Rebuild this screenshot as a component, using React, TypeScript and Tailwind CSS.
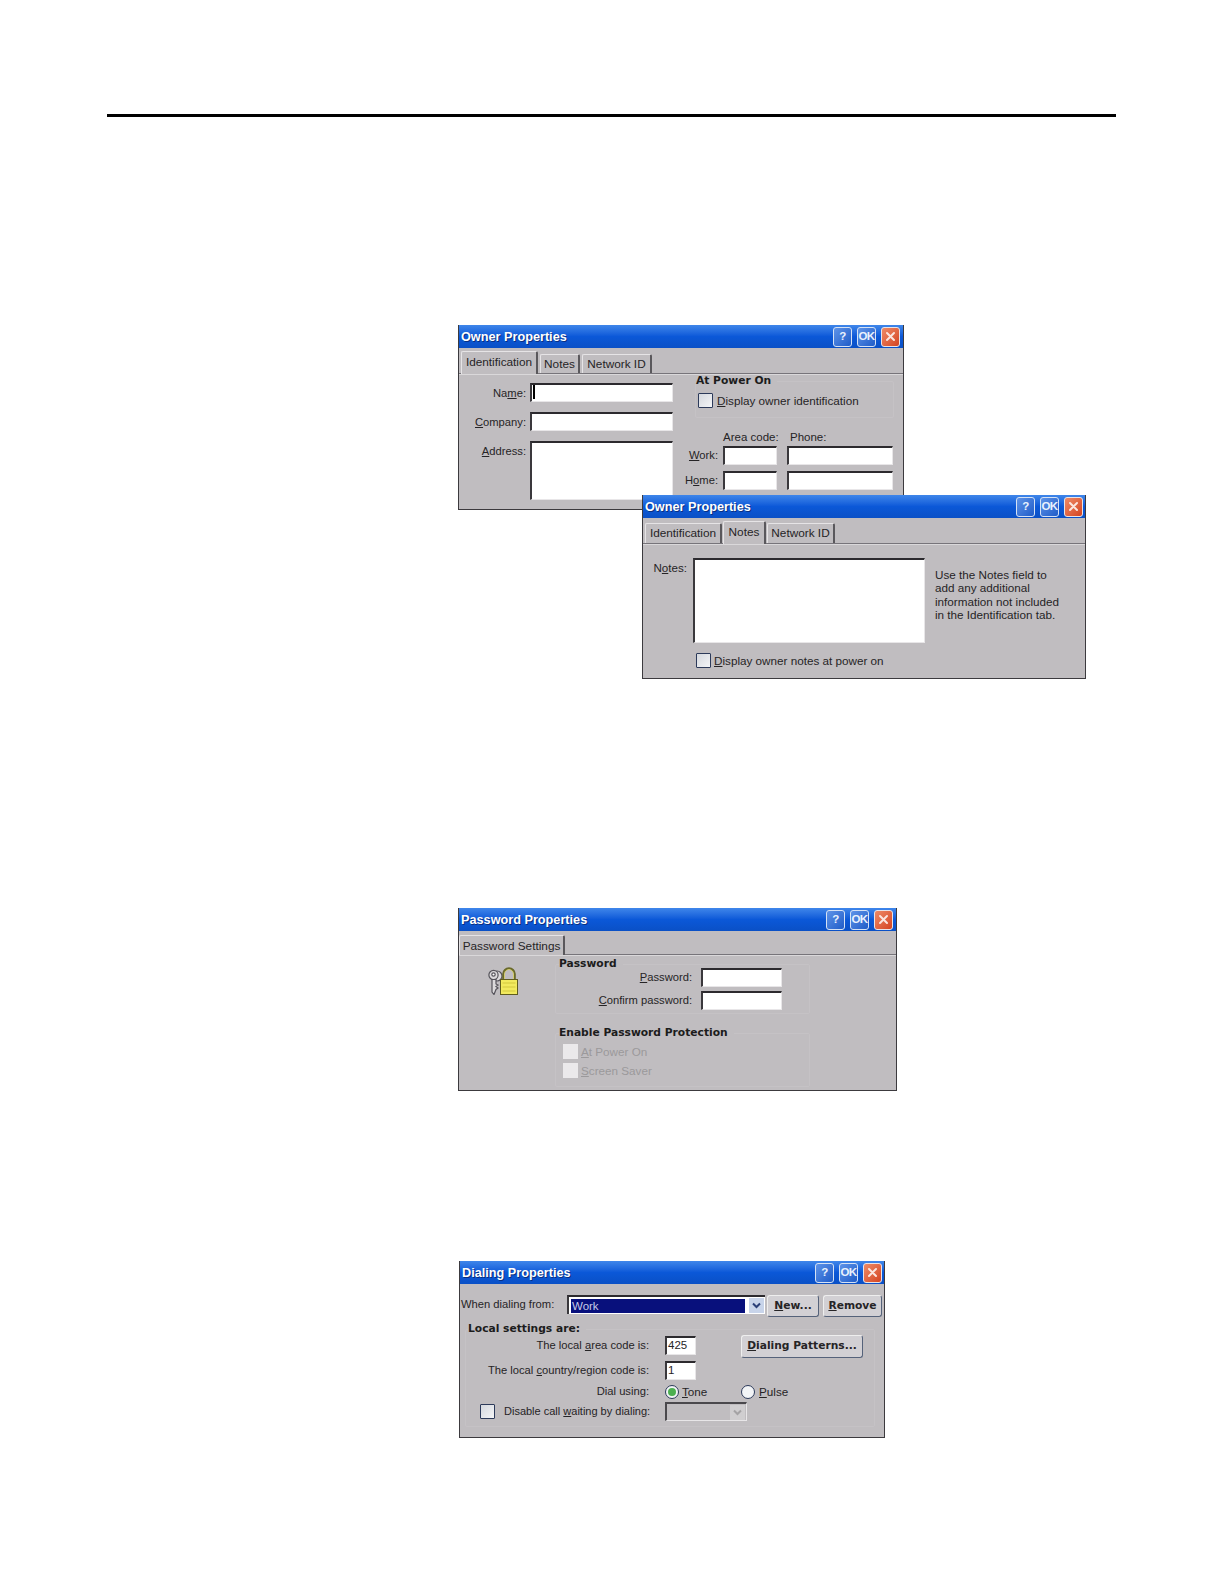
import React from 'react';

const uiFont = "font-['Liberation_Sans',Arial,sans-serif]";
const boldFont = "font-['DejaVu_Sans',Verdana,sans-serif] font-bold";

const TitleButton = ({ kind }: { kind: 'help' | 'ok' | 'close' }) => {
  if (kind === 'close') {
    return (
      <div className="w-[19px] h-[20px] rounded-[3px] border border-[#e8e4e8] bg-linear-to-br from-[#ee8a66] to-[#d4431f] flex items-center justify-center">
        <svg width="11" height="11" viewBox="0 0 11 11">
          <path d="M2 2 L9 9 M9 2 L2 9" stroke="#fbe6df" strokeWidth="2" strokeLinecap="round" />
        </svg>
      </div>
    );
  }
  return (
    <div className="w-[19px] h-[20px] rounded-[3px] border border-[#d5e2f5] bg-linear-to-br from-[#5e93e8] to-[#1f5cc8] flex items-center justify-center text-[#e9f1fd] text-[11.5px] leading-none font-bold font-['Liberation_Sans',sans-serif] tracking-[-0.5px]">
      {kind === 'help' ? '?' : 'OK'}
    </div>
  );
};

const TitleBar = ({ title, buttons = 'gap-[5px] pr-[3px]' }: { title: string; buttons?: string }) => (
  <div className="h-[23px] flex items-center justify-between pl-[2px] bg-linear-to-b from-[#3f86ea] via-[#0b58d8] to-[#0a50c6]">
    <span className="pt-px text-white text-[12.7px] font-bold leading-none font-['Liberation_Sans',Arial,sans-serif] [text-shadow:1px_1px_0_#0a2f80]">
      {title}
    </span>
    <div className={`flex ${buttons}`}>
      <TitleButton kind="help" />
      <TitleButton kind="ok" />
      <TitleButton kind="close" />
    </div>
  </div>
);

interface TabInfo {
  label: string;
  size: string;
  active?: boolean;
}

const Tabs = ({ tabs, className }: { tabs: TabInfo[]; className: string }) => (
  <div className={`flex items-end border-b border-[#77747a] shadow-[0_1px_0_#dad8da] ${className}`}>
    {tabs.map((t) => (
      <div
        key={t.label}
        className={
          t.active
            ? `${t.size} -mb-px pt-[2px] text-center whitespace-nowrap text-[11.8px] leading-[16px] bg-[#c0bdc0] border-t border-l border-[#e6e4e6] border-r-2 border-r-[#5a585c] rounded-t-[2px]`
            : `${t.size} pt-px text-center whitespace-nowrap text-[11.8px] leading-[16px] border-t border-l border-[#e6e4e6] border-r-2 border-r-[#5a585c] rounded-t-[2px]`
        }
      >
        {t.label}
      </div>
    ))}
  </div>
);

const Field = ({ className = '', children }: { className?: string; children?: React.ReactNode }) => (
  <div className={`bg-white border-t-2 border-l-2 border-t-[#2c2a2e] border-l-[#3a383c] border-r border-b border-r-[#e8e6e8] border-b-[#e8e6e8] text-[11.5px] leading-[15px] pl-px ${className}`}>
    {children}
  </div>
);

const Label = ({ className = '', children }: { className?: string; children: React.ReactNode }) => (
  <div className={`text-right text-[11.2px] leading-[19px] whitespace-nowrap ${className}`}>{children}</div>
);

const Check = ({ disabled = false }: { disabled?: boolean }) => (
  <div
    className={
      disabled
        ? 'w-[15px] h-[15px] bg-[#ebe9eb] shrink-0'
        : 'w-[15px] h-[15px] shrink-0 rounded-[1px] border border-[#2c3a5a] bg-linear-to-br from-[#d5d8de] to-[#f4f5f7]'
    }
  />
);

const Group = ({ legend, className = '', children }: { legend: string; className?: string; children: React.ReactNode }) => (
  <fieldset className={`border border-[#c5c2c5] rounded-[2px] ${className}`}>
    <legend className={`${boldFont} text-[10.7px] leading-[14px] text-[#1c1c1c] pr-[6px]`}>{legend}</legend>
    {children}
  </fieldset>
);

const Button = ({ className = '', children }: { className?: string; children: React.ReactNode }) => (
  <div className={`${boldFont} flex items-center justify-center whitespace-nowrap text-[10.7px] bg-[#d2d0d4] border border-[#55627a] border-t-[#eeeeee] border-l-[#eeeeee] rounded-[3px] ${className}`}>
    {children}
  </div>
);

const ArrowBox = ({ muted = false }: { muted?: boolean }) => (
  <div className={`w-[15px] h-[15px] shrink-0 flex items-center justify-center ${muted ? 'bg-[#d0ced0]' : 'bg-[#c8d4ea]'}`}>
    <svg width="9" height="7" viewBox="0 0 9 7">
      <path d="M1 1.5 L4.5 5 L8 1.5" fill="none" stroke={muted ? '#a5a3a5' : '#2a3f78'} strokeWidth="2" />
    </svg>
  </div>
);

const LockIcon = () => (
  <svg width="30" height="28" viewBox="0 0 30 28">
    <g stroke="#55535a" strokeWidth="1.2" fill="#dcdadc">
      <circle cx="9" cy="9" r="5" />
      <circle cx="5.5" cy="8" r="4.6" />
      <circle cx="5.5" cy="7.5" r="1.7" fill="#fff" />
      <path d="M4 12.5 H8 V17 L10 18 L8 19.5 L10 21 L8 22.5 L6 27.5 L4 25 Z" />
    </g>
    <path d="M15.5 13 V7 a5.5 5.5 0 0 1 11 0 V13" fill="none" stroke="#6a6a2a" strokeWidth="2.6" />
    <path d="M16.5 12 V7 a4.5 4.5 0 0 1 9 0 V12" fill="none" stroke="#e8e07c" strokeWidth="0.8" />
    <rect x="12.5" y="12.5" width="17" height="15" fill="#f2ea5e" stroke="#5f5c1e" />
    <path d="M14.5 16 H27.5 M14.5 20 H27.5 M14.5 24 H27.5" stroke="#d2c83c" strokeWidth="1" />
  </svg>
);

const Window = ({ className = '', children }: { className?: string; children: React.ReactNode }) => (
  <div className={`bg-[#c0bdc0] border-l border-r border-b border-[#3c3a3e] overflow-hidden ${uiFont} text-[11.7px] text-[#262426] ${className}`}>
    {children}
  </div>
);

const OwnerIdentification = () => (
  <Window className="w-[446px] h-[185px]">
    <TitleBar title="Owner Properties" />
    <Tabs
      className="h-[26px] pl-[2px] gap-[2px]"
      tabs={[
        { label: 'Identification', size: 'w-[77px] h-[23px]', active: true },
        { label: 'Notes', size: 'w-[40px] h-[19px]' },
        { label: 'Network ID', size: 'w-[70px] h-[19px]' },
      ]}
    />
    <div className="flex">
      <div className="grid grid-cols-[67px_143px] gap-x-[4px] gap-y-[10px] auto-rows-min pt-[9px]">
        <Label className="h-[19px] pt-px">Na<u>m</u>e:</Label>
        <Field className="h-[19px]">
          <div className="w-[2px] h-[14px] bg-black" />
        </Field>
        <Label className="h-[19px] pt-px"><u>C</u>ompany:</Label>
        <Field className="h-[19px]" />
        <Label className="h-[19px] pt-px"><u>A</u>ddress:</Label>
        <Field className="h-[59px]" />
      </div>
      <div className="ml-[5px] w-[218px]">
        <Group legend="At Power On" className="ml-[17px] w-[199px] h-[44px]">
          <div className="flex items-center gap-[4px] mt-[5px] ml-[2px]">
            <Check />
            <span className="leading-[15px]"><u>D</u>isplay owner identification</span>
          </div>
        </Group>
        <div className="flex mt-[12px] ml-[45px] leading-[14px] text-[11.5px]">
          <div className="w-[67px] whitespace-nowrap">Area code:</div>
          <div>Phone:</div>
        </div>
        <div className="flex mt-[2px]">
          <Label className="w-[40px]"><u>W</u>ork:</Label>
          <Field className="h-[19px] w-[54px] ml-[5px]" />
          <Field className="h-[19px] w-[106px] ml-[10px]" />
        </div>
        <div className="flex mt-[6px]">
          <Label className="w-[40px]">H<u>o</u>me:</Label>
          <Field className="h-[19px] w-[54px] ml-[5px]" />
          <Field className="h-[19px] w-[106px] ml-[10px]" />
        </div>
      </div>
    </div>
  </Window>
);

const OwnerNotes = () => (
  <Window className="w-[444px] h-[184px] relative z-10 ml-[184px] -mt-[15px]">
    <TitleBar title="Owner Properties" buttons="gap-[5px] pr-[2px]" />
    <Tabs
      className="h-[26px] pl-[2px] gap-px"
      tabs={[
        { label: 'Identification', size: 'w-[77px] h-[20px]' },
        { label: 'Notes', size: 'w-[43px] h-[23px]', active: true },
        { label: 'Network ID', size: 'w-[68px] h-[20px]' },
      ]}
    />
    <div className="flex pt-[14px]">
      <Label className="w-[44px] text-[11.6px]">N<u>o</u>tes:</Label>
      <div className="ml-[6px]">
        <Field className="w-[232px] h-[85px]" />
        <div className="flex items-center gap-[3px] mt-[10px] ml-[3px]">
          <Check />
          <span className="leading-[15px]"><u>D</u>isplay owner notes at power on</span>
        </div>
      </div>
      <div className="ml-[10px] mt-[10px] leading-[13.4px] whitespace-nowrap">
        <div>Use the Notes field to</div>
        <div>add any additional</div>
        <div>information not included</div>
        <div>in the Identification tab.</div>
      </div>
    </div>
  </Window>
);

const PasswordProperties = () => (
  <Window className="w-[439px] h-[183px] mt-[229px]">
    <TitleBar title="Password Properties" buttons="gap-[5px] pr-[3px]" />
    <Tabs
      className="h-[24px]"
      tabs={[{ label: 'Password Settings', size: 'w-[106px] h-[20px]', active: true }]}
    />
    <div className="flex">
      <div className="ml-[29px] mt-[12px] w-[30px]">
        <LockIcon />
      </div>
      <div className="ml-[37px] w-[255px] mt-[2px]">
        <Group legend="Password" className="h-[57px] pl-[3px]">
          <div className="flex -mt-[3px]">
            <Label className="w-[133px]"><u>P</u>assword:</Label>
            <Field className="h-[19px] w-[81px] ml-[9px]" />
          </div>
          <div className="flex mt-[4px]">
            <Label className="w-[133px]"><u>C</u>onfirm password:</Label>
            <Field className="h-[19px] w-[81px] ml-[9px]" />
          </div>
        </Group>
        <Group legend="Enable Password Protection" className="h-[61px] mt-[12px] pl-[3px]">
          <div className="flex flex-col gap-[4px] text-[#9b999b] mt-[4px] ml-[4px]">
            <div className="flex items-center gap-[3px]">
              <Check disabled />
              <span className="leading-[15px]"><u>A</u>t Power On</span>
            </div>
            <div className="flex items-center gap-[3px]">
              <Check disabled />
              <span className="leading-[15px]"><u>S</u>creen Saver</span>
            </div>
          </div>
        </Group>
      </div>
    </div>
  </Window>
);

const Radio = ({ on = false }: { on?: boolean }) => (
  <div className="w-[14px] h-[14px] rounded-full border border-[#2c3a5a] bg-[#f2f4f6] flex items-center justify-center shrink-0">
    {on && <div className="w-[8px] h-[8px] rounded-full bg-[#4caf50]" />}
  </div>
);

const DialingProperties = () => (
  <Window className="w-[426px] h-[177px] mt-[170px] ml-px">
    <TitleBar title="Dialing Properties" buttons="gap-[5px] pr-[2px]" />
    <div className="flex items-start pt-[11px] pl-px">
      <div className="w-[106px] text-[11.2px] leading-[19px] whitespace-nowrap">When dialing from:</div>
      <div className="w-[198px] h-[19px] flex items-center justify-between pr-px bg-white border-t-2 border-l-2 border-t-[#2c2a2e] border-l-[#3a383c]">
        <div className="w-[174px] h-[14px] ml-[2px] bg-[#08107c] text-[#c7cbe8] leading-[14px] text-[11.5px] pl-px">Work</div>
        <ArrowBox />
      </div>
      <Button className="w-[52px] h-[22px] ml-[2px]"><span><u>N</u>ew...</span></Button>
      <Button className="w-[59px] h-[22px] ml-[4px]"><span><u>R</u>emove</span></Button>
    </div>
    <Group legend="Local settings are:" className="ml-[5px] w-[410px] h-[105px] mt-[5px] pl-[2px]">
      <div className="flex items-start h-[19px]">
        <Label className="w-[181px]">The local <u>a</u>rea code is:</Label>
        <Field className="h-[19px] w-[31px] ml-[16px]">425</Field>
        <Button className="w-[122px] h-[23px] ml-[45px] -mt-px"><span><u>D</u>ialing Patterns...</span></Button>
      </div>
      <div className="flex mt-[6px]">
        <Label className="w-[181px]">The local <u>c</u>ountry/region code is:</Label>
        <Field className="h-[19px] w-[31px] ml-[16px]">1</Field>
      </div>
      <div className="flex items-center mt-[2px]">
        <Label className="w-[181px] leading-[18px]">Dial using:</Label>
        <div className="ml-[16px] flex items-center gap-[3px] w-[76px]">
          <Radio on />
          <span className="leading-[15px]"><u>T</u>one</span>
        </div>
        <div className="flex items-center gap-[4px]">
          <Radio />
          <span className="leading-[15px]"><u>P</u>ulse</span>
        </div>
      </div>
      <div className="flex items-center mt-px">
        <div className="w-[181px] flex items-center pl-[12px]">
          <Check />
          <Label className="ml-[9px] text-[11px]">Disable call <u>w</u>aiting by dialing:</Label>
        </div>
        <div className="ml-[16px] w-[82px] h-[19px] flex items-center justify-end pr-px bg-[#c0bdc0] border-t-2 border-l-2 border-t-[#4a484c] border-l-[#4a484c] border-r border-b border-r-[#e8e6e8] border-b-[#e8e6e8]">
          <ArrowBox muted />
        </div>
      </div>
    </Group>
  </Window>
);

export default function App() {
  return (
    <div className="w-[1224px] h-[1584px] bg-white overflow-hidden">
      <div className="h-[114px]" />
      <div className="ml-[107px] w-[1009px] h-[3px] bg-black" />
      <div className="ml-[458px] mt-[208px] w-[640px]">
        <OwnerIdentification />
        <OwnerNotes />
        <PasswordProperties />
        <DialingProperties />
      </div>
    </div>
  );
}
